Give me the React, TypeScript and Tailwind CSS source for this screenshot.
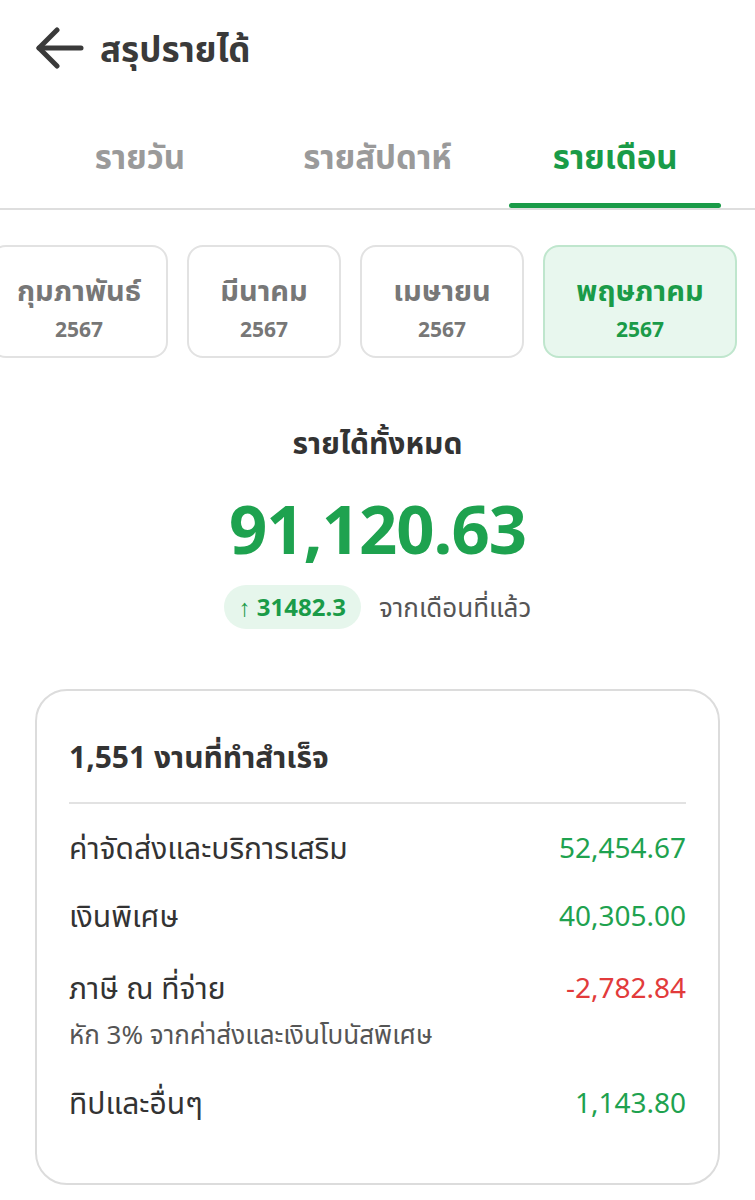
import React from 'react';

const months = [
    { name: 'กุมภาพันธ์', year: '2567', w: 'w-[178px]', active: false },
    { name: 'มีนาคม', year: '2567', w: 'w-[154px]', active: false },
    { name: 'เมษายน', year: '2567', w: 'w-[164px]', active: false },
    { name: 'พฤษภาคม', year: '2567', w: 'w-[194px]', active: true },
];

const App: React.FC = () => {
    return (
        <div className="w-[755px] h-[1200px] bg-white overflow-hidden text-[#333] font-['Noto_Sans','Noto_Sans_Thai',sans-serif]">
            {/* Header */}
            <div className="flex items-center gap-[16px] pl-[36px] h-[96px]">
                <svg width="48" height="42" viewBox="0 0 48 42" fill="none" stroke="#3a3a3a" strokeWidth="5" strokeLinecap="round" strokeLinejoin="round">
                    <polyline points="21,3 3,21 21,39" />
                    <line x1="3" y1="21" x2="45" y2="21" />
                </svg>
                <h1 className="text-[35px] font-bold text-[#3a3a3a] leading-none">สรุปรายได้</h1>
            </div>

            {/* Tabs */}
            <div className="border-b-2 border-[#dedede]">
                <div className="flex px-[21px] pt-[14px]">
                    {['รายวัน', 'รายสัปดาห์', 'รายเดือน'].map((t, i) => (
                        <div key={t} className="flex-1 flex flex-col items-center">
                            <div className={`h-[93px] flex items-center text-[33px] font-bold ${i === 2 ? 'text-[#1a9b48]' : 'text-[#9a9a9a]'}`}>{t}</div>
                            <div className={`h-[5px] w-[212px] rounded-full ${i === 2 ? 'bg-[#1a9b48]' : 'bg-transparent'}`} />
                        </div>
                    ))}
                </div>
            </div>

            {/* Months */}
            <div className="flex gap-[19px] ml-[-10px] mt-[35px] overflow-hidden">
                {months.map(m => (
                    <div
                        key={m.name}
                        className={`${m.w} shrink-0 h-[113px] rounded-[16px] border-2 flex flex-col items-center pt-[25px] gap-[9px] ${m.active ? 'bg-[#e8f7ee] border-[#bfe6cd]' : 'bg-white border-[#e2e2e2]'}`}
                    >
                        <span className={`h-[36px] flex items-center text-[29px] font-bold ${m.active ? 'text-[#1a9b48]' : 'text-[#777]'}`}>{m.name}</span>
                        <span className={`h-[26px] flex items-center text-[21px] font-bold ${m.active ? 'text-[#1a9b48]' : 'text-[#777]'}`}>{m.year}</span>
                    </div>
                ))}
            </div>

            {/* Total */}
            <div className="flex flex-col items-center mt-[70px]">
                <div className="text-[30px] font-bold text-[#333] leading-none">รายได้ทั้งหมด</div>
                <div className="text-[67px] font-bold text-[#1ea24f] leading-none mt-[37px] tracking-[-1px]">91,120.63</div>
                <div className="flex items-center gap-[18px] mt-[23px]">
                    <div className="h-[44px] px-[15px] rounded-full bg-[#e6f6ec] flex items-center text-[24px] font-bold text-[#1a9b48]">
                        <span className="font-normal mr-[6px]">↑</span>31482.3
                    </div>
                    <span className="text-[26px] text-[#555]">จากเดือนที่แล้ว</span>
                </div>
            </div>

            {/* Detail card */}
            <div className="mx-[35px] mt-[60px] h-[496px] rounded-[32px] border-2 border-[#dcdcdc] px-[32px] pt-[46px]">
                <div className="h-[39px] flex items-center text-[30px] font-bold text-[#333] mb-[26px]">1,551 งานที่ทำสำเร็จ</div>
                <div className="border-t-2 border-[#e2e2e2] pt-[9px]">
                    <div className="h-[68px] flex justify-between items-center">
                        <span className="text-[30px] text-[#333]">ค่าจัดส่งและบริการเสริม</span>
                        <span className="text-[28px] text-[#1ea24f]">52,454.67</span>
                    </div>
                    <div className="h-[68px] flex justify-between items-center">
                        <span className="text-[30px] text-[#333]">เงินพิเศษ</span>
                        <span className="text-[28px] text-[#1ea24f]">40,305.00</span>
                    </div>
                    <div className="pt-[20px] pb-[19px]">
                        <div className="h-[36px] flex justify-between items-center">
                            <span className="text-[30px] text-[#333]">ภาษี ณ ที่จ่าย</span>
                            <span className="text-[28px] text-[#e23b3b]">-2,782.84</span>
                        </div>
                        <div className="h-[30px] mt-[14px] flex items-center text-[26px] text-[#555]">หัก 3% จากค่าส่งและเงินโบนัสพิเศษ</div>
                    </div>
                    <div className="h-[68px] flex justify-between items-center">
                        <span className="text-[30px] text-[#333]">ทิปและอื่นๆ</span>
                        <span className="text-[28px] text-[#1ea24f]">1,143.80</span>
                    </div>
                </div>
            </div>
        </div>
    );
};

export default App;
